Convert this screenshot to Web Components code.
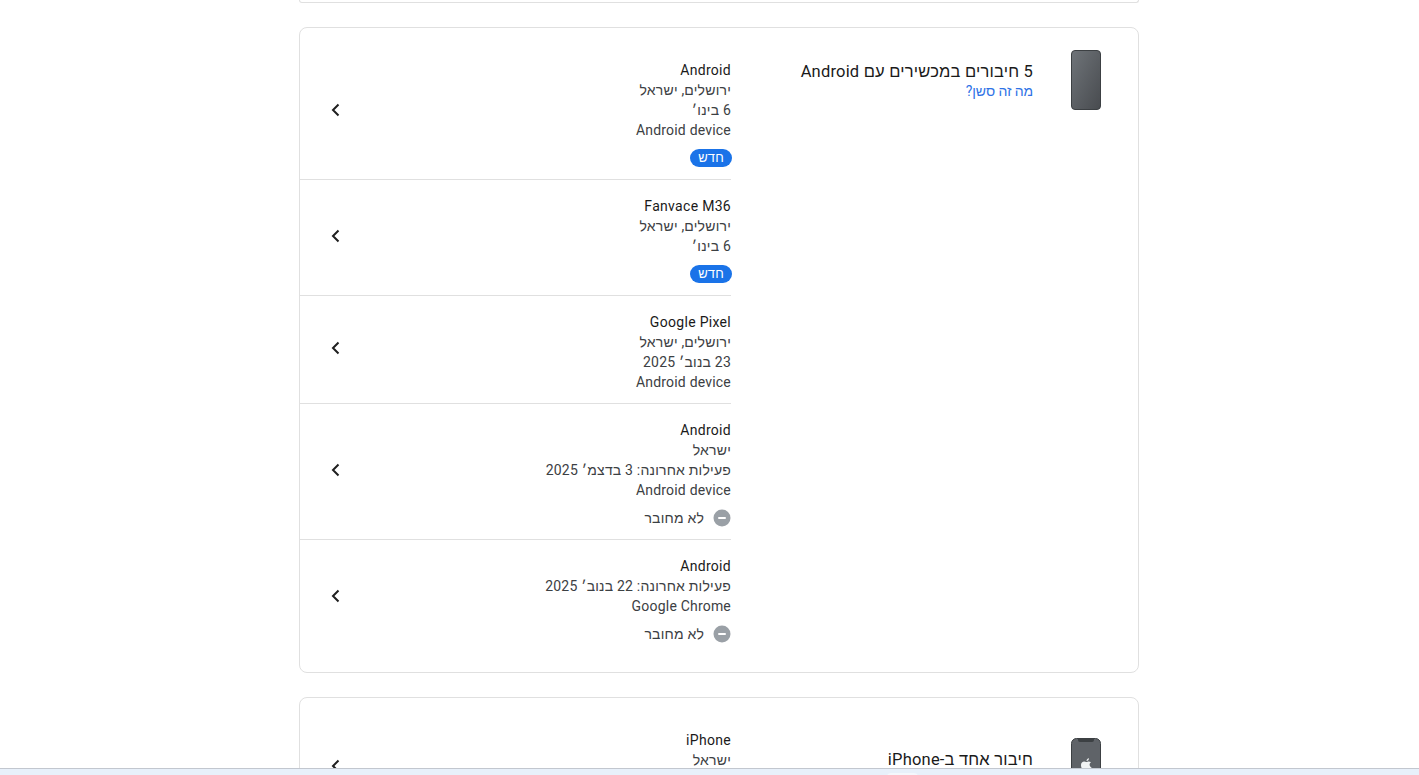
<!DOCTYPE html>
<html lang="he" dir="rtl">
<head>
<meta charset="utf-8">
<title>חיבורים</title>
<style>
  html, body { margin: 0; height: 100%; overflow: hidden; background: #fff; }
  body { font-family: Roboto, "Liberation Sans", sans-serif; color: #1f1f1f; }
</style>
</head>
<body>
<session-page>
  <session-card class="cut"></session-card>

  <session-card>
    <device-summary slot="summary" title-text="5 חיבורים במכשירים עם Android" link="מה זה סשן?"></device-summary>
    <session-row name="Android" lines="ירושלים, ישראל|6 בינו׳|Android device" state="new"></session-row>
    <session-row name="Fanvace M36" lines="ירושלים, ישראל|6 בינו׳" state="new"></session-row>
    <session-row name="Google Pixel" lines="ירושלים, ישראל|23 בנוב׳ 2025|Android device"></session-row>
    <session-row name="Android" lines="ישראל|פעילות אחרונה: 3 בדצמ׳ 2025|Android device" state="off"></session-row>
    <session-row name="Android" lines="פעילות אחרונה: 22 בנוב׳ 2025|Google Chrome" state="off" last></session-row>
  </session-card>

  <session-card class="low">
    <device-summary slot="summary" title-text="חיבור אחד ב-iPhone" kind="iphone"></device-summary>
    <session-row name="iPhone" lines="ישראל" last tall></session-row>
  </session-card>
</session-page>
<bottom-strip></bottom-strip>

<script>
'use strict';

/* ── page column ─────────────────────────────────────── */
class SessionPage extends HTMLElement {
  constructor() {
    super();
    this.attachShadow({ mode: 'open' });
    this.shadowRoot.innerHTML = `
      <style>
        :host { display: flex; flex-direction: column; gap: 24px; width: 840px; margin: 0 280px 0 299px;
                height: 775px; overflow: hidden; }
      </style>
      <slot></slot>`;
  }
}

/* ── bordered card: summary on the right, rows on the left ── */
class SessionCard extends HTMLElement {
  constructor() {
    super();
    this.attachShadow({ mode: 'open' });
    this.shadowRoot.innerHTML = `
      <style>
        :host { display: block; flex: none; box-sizing: border-box; width: 840px;
                border: 1px solid #e0e0e0; border-radius: 8px; background: #fff; }
        :host(.cut) { height: 3px; border-top: 0; border-radius: 0 0 8px 8px; }
        :host(.cut) .wrap { display: none; }
        :host(.low) .side { padding-top: 18px; }
        .wrap { display: flex; padding: 16px 0; }
        .side { width: 407px; flex: none; }
        .list { width: 431px; flex: none; }
      </style>
      <div class="wrap">
        <div class="side"><slot name="summary"></slot></div>
        <div class="list"><slot></slot></div>
      </div>`;
  }
}

/* ── phone picture, title and link ───────────────────── */
class DeviceSummary extends HTMLElement {
  constructor() {
    super();
    this.attachShadow({ mode: 'open' });
    const iphone = this.getAttribute('kind') === 'iphone';
    const link = this.getAttribute('link');
    this.shadowRoot.innerHTML = `
      <style>
        :host { display: flex; align-items: flex-start; gap: 38px; padding: 6px 37px 0 0; }
        svg { flex: none; display: block; }
        .title { font-size: 16.5px; line-height: 24px; letter-spacing: .2px; color: #1a1a1a; margin-top: 10px; white-space: nowrap; }
        .link { display: block; font-size: 14px; line-height: 16px; letter-spacing: -.1px; color: #2f73e6; text-decoration: none; margin-top: -1px; }
      </style>
      ${iphone ? PHONE_IPHONE : PHONE_ANDROID}
      <div>
        <div class="title">${this.getAttribute('title-text')}</div>
        ${link ? `<a class="link">${link}</a>` : ''}
      </div>`;
  }
}

const PHONE_DEFS = `
  <defs><linearGradient id="g" x1="0" y1="0" x2="1" y2="1">
    <stop offset="0" stop-color="#6f7479"/><stop offset="1" stop-color="#484b4f"/>
  </linearGradient></defs>`;
const PHONE_ANDROID = `
  <svg width="30" height="60" viewBox="0 0 30 60">${PHONE_DEFS}
    <rect x=".5" y=".5" width="29" height="59" rx="3.5" fill="url(#g)" stroke="#3c4043"/>
  </svg>`;
const PHONE_IPHONE = `
  <svg width="30" height="60" viewBox="0 0 30 60">${PHONE_DEFS}
    <rect x=".5" y=".5" width="29" height="59" rx="5" fill="#5f6368" stroke="#3c4043"/>
    <path d="M7 1h16v1a2 2 0 0 1-2 2H9a2 2 0 0 1-2-2z" fill="#3c4043"/>
    <path transform="translate(0 1.800)" d="M17.600 21.600c-.8 0-1.300.5-2.200.5s-1.500-.5-2.300-.5c-1.700 0-3.100 1.500-3.100 3.800 0 2.700 2 6 3.500 6 .8 0 1-.5 2-.5s1.200.5 2 .5c1.300 0 2.600-2.300 3-3.900-1.200-.5-1.900-1.400-1.900-2.600 0-1 .5-1.900 1.400-2.400-.6-.6-1.500-.9-2.400-.9zM15.500 21.200c0-1.400 1-2.600 2.500-2.800 0 1.500-1 2.700-2.500 2.800z" fill="#f1f3f4"/>
  </svg>`;

/* ── one signed in device ────────────────────────────── */
class SessionRow extends HTMLElement {
  constructor() {
    super();
    this.attachShadow({ mode: 'open' });
    const lines = (this.getAttribute('lines') || '').split('|');
    const state = this.getAttribute('state');
    let status = '';
    if (state === 'new') status = `<div class="status"><span class="badge">חדש</span></div>`;
    if (state === 'off') status = `
      <div class="status"><svg width="18" height="18" viewBox="0 0 18 18">
        <circle cx="9" cy="9" r="8.500" fill="#9aa0a6"/><rect x="5" y="8" width="8" height="2" rx="1" fill="#fff"/>
      </svg><span>לא מחובר</span></div>`;
    this.shadowRoot.innerHTML = `
      <style>
        :host { display: flex; align-items: center; justify-content: space-between; box-sizing: border-box;
                padding: 16px 0 11px; border-bottom: 1px solid #e0e0e0; font-size: 14px; line-height: 20px;
                letter-spacing: .2px; color: #3c4043; }
        :host([last]) { padding-bottom: 12px; border-bottom: 0; }
        :host([tall]) { min-height: 108px; }
        .text { align-self: flex-start; }
        .name { color: #1a1a1a; letter-spacing: .3px; }
        .status { display: flex; align-items: center; gap: 9px; height: 20px; margin-top: 8px; }
        .badge { background: #1a73e8; color: #fff; font-size: 13px; font-weight: 500; line-height: 18px;
                 height: 18px; padding: 0 8px; border-radius: 9px; margin-right: -1px; }
        .chev { display: block; margin: 0 0 8px 24px; flex: none; }
      </style>
      <div class="text">
        <div class="name">${this.getAttribute('name')}</div>
        ${lines.map(l => `<div>${l}</div>`).join('')}
        ${status}
      </div>
      <svg class="chev" width="24" height="24" viewBox="0 0 24 24">
        <path d="M14.500 6.500 9 12l5.500 5.500" fill="none" stroke="#1f1f1f" stroke-width="2"/>
      </svg>`;
  }
}

/* ── browser bar peeking in at the bottom ────────────── */
class BottomStrip extends HTMLElement {
  constructor() {
    super();
    this.attachShadow({ mode: 'open' });
    this.shadowRoot.innerHTML = `
      <style>
        :host { position: fixed; left: 0; right: 0; bottom: 0; height: 6px; background: #e8f0fa;
                border-top: 1px solid #c2c7cf; overflow: hidden; }
        .tab { position: absolute; left: 887px; top: 4px; width: 31px; height: 8px; background: #f4f7fc; border-radius: 4px 4px 0 0; }
      </style>
      <div class="tab"></div>`;
  }
}

customElements.define('session-page', SessionPage);
customElements.define('session-card', SessionCard);
customElements.define('device-summary', DeviceSummary);
customElements.define('session-row', SessionRow);
customElements.define('bottom-strip', BottomStrip);
</script>
</body>
</html>
